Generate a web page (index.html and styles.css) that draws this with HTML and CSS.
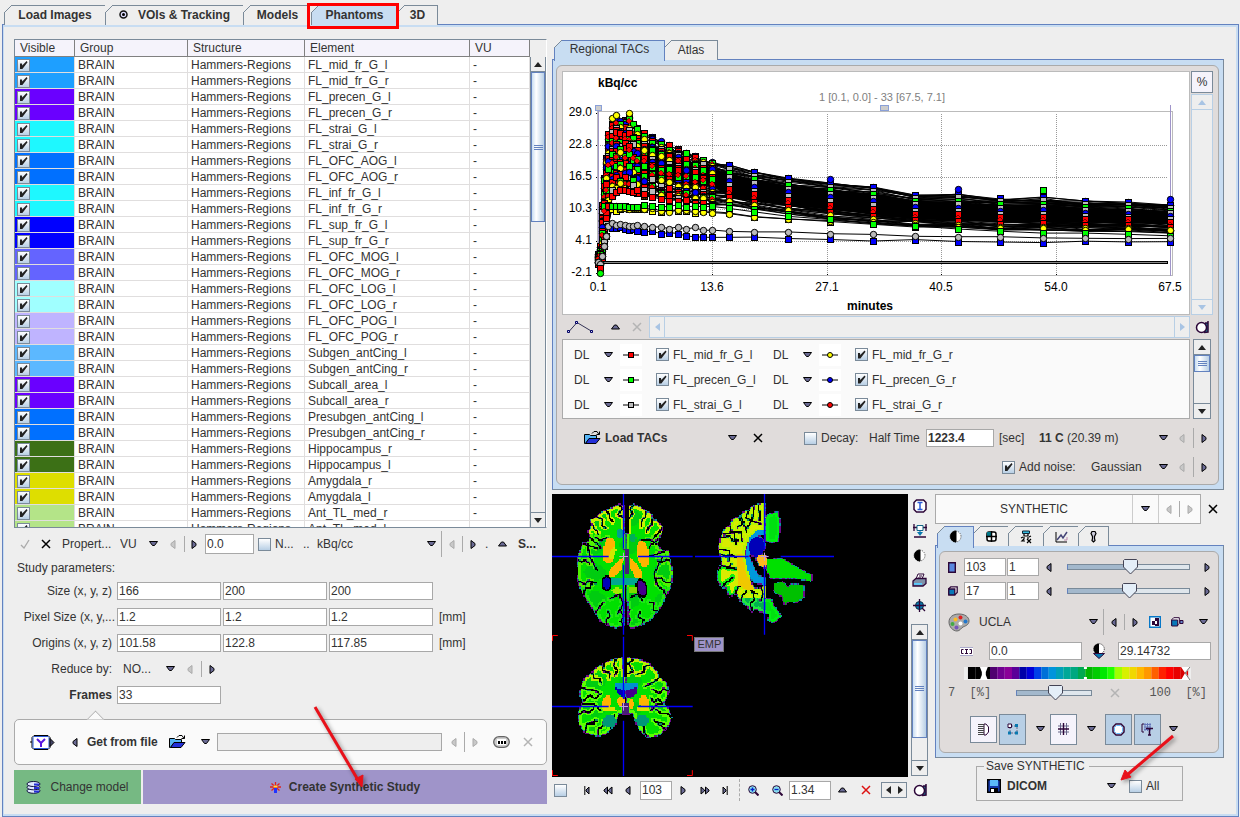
FILE: index.html
```html
<!DOCTYPE html>
<html lang="en">
<head>
<meta charset="utf-8">
<title>Phantoms</title>
<link rel="stylesheet" href="styles.css">
</head>
<body>
<svg class="sprite" aria-hidden="true">
  <symbol id="down" viewBox="0 0 9 6"><path d="M.5 .5h8l-3 4h-2z" fill="#6a6a94" stroke="#000"/></symbol>
  <symbol id="up" viewBox="0 0 9 6"><path d="M.5 5h8l-3-4h-2z" fill="#6a6a94" stroke="#000"/></symbol>
  <symbol id="left" viewBox="0 0 6 9"><path d="M5 .5v8l-4-3v-2z" fill="#6a6a94" stroke="#000"/></symbol>
  <symbol id="right" viewBox="0 0 6 9"><path d="M1 .5v8l4-3v-2z" fill="#6a6a94" stroke="#000"/></symbol>
  <symbol id="left-off" viewBox="0 0 6 9"><path d="M5 .5v8l-4-3v-2z" fill="#c8c8c8" stroke="#aaa"/></symbol>
  <symbol id="right-off" viewBox="0 0 6 9"><path d="M1 .5v8l4-3v-2z" fill="#c8c8c8" stroke="#aaa"/></symbol>
  <symbol id="cross" viewBox="0 0 10 10"><path d="M1 1l8 8M9 1L1 9" fill="none" stroke="currentColor" stroke-width="1.5"/></symbol>
  <symbol id="tick" viewBox="0 0 10 10"><path d="M1 6l3 3 5-8" fill="none" stroke="#aaa" stroke-width="1.3"/></symbol>
  <symbol id="folder" viewBox="0 0 17 14"><path d="M.5 3.5h5l1 1h6v3h-7l-4 5h-1z" fill="#55b4f4" stroke="#000"/><path d="M5 7.500h11l-4 5H1.500z" fill="#2430d8" stroke="#000"/><path d="M8 2.500l2-2h3l2 3M15.500 .5v3h-3" fill="none" stroke="#000"/></symbol>
  <symbol id="lens" viewBox="0 0 15 15"><path d="M8 3h5v9H8z" fill="#187a94"/><circle cx="6.500" cy="7.500" r="5" fill="#fff" stroke="#2c0638" stroke-width="1.500"/><path d="M13 1v11l-4 .500M10 3h3" fill="none" stroke="#2c0638" stroke-width="1.500"/></symbol>
  <symbol id="contrast" viewBox="0 0 13 13"><circle cx="6.500" cy="6.500" r="5.500" fill="#fff" stroke="#555" stroke-dasharray="1 1"/><path d="M7 1a5.500 5.500 0 0 0 0 11z" fill="#000" stroke="#000"/></symbol>
</svg>

<nav class="tabs main-tabs">
  <button class="tab w101">Load Images</button>
  <button class="tab w138"><svg width="9" height="9" viewBox="0 0 9 9"><circle cx="4.500" cy="4.500" r="3.500" fill="#ddf" stroke="#111" stroke-width="1.500"/><circle cx="4.500" cy="4.500" r="1.500"/></svg>VOIs &amp; Tracking</button>
  <button class="tab w68">Models</button>
  <button class="tab w86 on marked">Phantoms</button>
  <button class="tab w40">3D</button>
</nav>

<main class="frame">
<section class="left">
  <div class="table-box">
    <table>
      <colgroup><col class="c60"><col class="c113"><col class="c117"><col class="c165"><col class="c60"></colgroup>
      <thead><tr><th>Visible</th><th>Group</th><th>Structure</th><th>Element</th><th>VU</th></tr></thead>
      <tbody id="rows"></tbody>
    </table>
    <div class="vscroll table-scroll"><button aria-label="Scroll up"><i class="au"></i></button><div class="thumb"></div><span class="room"></span><button aria-label="Scroll down"><i class="ad"></i></button></div>
  </div>

  <div class="bar props">
    <svg width="10" height="10"><use href="#tick"/></svg>
    <button aria-label="Remove"><svg width="10" height="10"><use href="#cross"/></svg></button>
    <span>Propert...</span>
    <select aria-label="Property"><option>VU</option></select>
    <svg width="9" height="6"><use href="#down"/></svg>
    <svg width="6" height="9"><use href="#left-off"/></svg><i class="sep"></i>
    <button aria-label="Next"><svg width="6" height="9"><use href="#right"/></svg></button>
    <input type="text" value="0.0" aria-label="Value">
    <input type="checkbox" id="nn"><label for="nn">N...</label><span>..</span>
    <select aria-label="Unit"><option>kBq/cc</option></select>
    <svg width="9" height="6"><use href="#down"/></svg><i class="sep tall"></i>
    <svg width="6" height="9"><use href="#left-off"/></svg><i class="sep"></i>
    <button aria-label="Next unit"><svg width="6" height="9"><use href="#right"/></svg></button><span>.</span>
    <button aria-label="More"><svg width="9" height="6"><use href="#up"/></svg></button><b>S...</b>
  </div>

  <p class="caption">Study parameters:</p>
  <div class="params">
    <label for="sx">Size (x, y, z)</label><input type="text" id="sx" value="166"><input type="text" value="200" aria-label="Size y"><input type="text" value="200" aria-label="Size z"><span></span>
    <label for="px">Pixel Size (x, y,...</label><input type="text" id="px" value="1.2"><input type="text" value="1.2" aria-label="Pixel y"><input type="text" value="1.2" aria-label="Pixel z"><span>[mm]</span>
    <label for="ox">Origins (x, y, z)</label><input type="text" id="ox" value="101.58"><input type="text" value="122.8" aria-label="Origin y"><input type="text" value="117.85" aria-label="Origin z"><span>[mm]</span>
    <label for="red">Reduce by:</label>
    <div class="bar reduce"><select id="red"><option>NO...</option></select><svg width="9" height="6"><use href="#down"/></svg><svg width="6" height="9"><use href="#left-off"/></svg><i class="sep"></i><button aria-label="Next"><svg width="6" height="9"><use href="#right"/></svg></button></div>
    <label for="fr" class="strong">Frames</label><input type="text" id="fr" value="33">
  </div>

  <div class="bubble bar">
    <svg width="25" height="17" viewBox="0 0 25 17"><path d="M4 1.500h14l2 2v10l-2 2H4l-2-2v-10z" fill="#fff" stroke="#000"/><path d="M4 2.500h14l1 1v10l-1 1H4l-1-1v-10z" fill="none" stroke="#2a5ad8"/><path d="M7 5l4 4v4M15 5l-4 4" fill="none" stroke="#5a18e0" stroke-width="2"/><path d="M0 8h2M20 4.500l4 4-4 4z" stroke="#000" fill="#446"/></svg>
    <button aria-label="Previous"><svg width="6" height="9"><use href="#left"/></svg></button>
    <b>Get from file</b>
    <button aria-label="Open"><svg width="17" height="14"><use href="#folder"/></svg></button>
    <button aria-label="Choose"><svg width="9" height="6"><use href="#down"/></svg></button>
    <input type="text" class="gray" aria-label="File">
    <svg class="gap" width="6" height="9"><use href="#left-off"/></svg><i class="sep"></i><svg width="6" height="9"><use href="#right-off"/></svg>
    <svg width="17" height="12" viewBox="0 0 17 12"><rect x=".7" y=".7" width="15.600" height="10.600" rx="5.300" fill="#ccc" stroke="#666" stroke-width="1.300"/><rect x="4" y="3" width="9" height="6" fill="#fff"/><path d="M5 5h2v3H5zM8 5h2v3H8zM11 5h2v3h-2z"/></svg>
    <svg class="off" width="10" height="10"><use href="#cross"/></svg>
  </div>
  <div class="actions">
    <button class="change"><svg width="15" height="13" viewBox="0 0 15 13"><g fill="#dfe8ff" stroke="#101040"><ellipse cx="7.500" cy="9.800" rx="6.500" ry="2.500"/><ellipse cx="7.500" cy="6.300" rx="6.500" ry="2.500"/><ellipse cx="7.500" cy="3" rx="6.500" ry="2.500"/></g><path d="M8 3.500h5M8 7h5M8 10.500h5" stroke="#2430d8" stroke-width="2"/></svg>Change model</button>
    <button class="create"><svg width="11" height="11" viewBox="0 0 11 11"><path d="M5.500 0v4M0 5h11M1.500 1.500l8 7M9.500 1.500l-8 7" stroke="#d22" stroke-width="1.300"/><path d="M3.500 3.500h4v2h-4z" fill="#fd4"/><path d="M4 6h3v5H4z" fill="#23f"/></svg>Create Synthetic Study</button>
  </div>
</section>

<section class="right">
  <div class="tacs">
    <nav class="tabs light"><button class="tab on w111">Regional TACs</button><button class="tab w53">Atlas</button></nav>
    <div class="blue"><div class="inner chart-panel">
      <div class="chart"><svg id="chart" viewBox="563 72 626 242" preserveAspectRatio="none" role="img" aria-label="Time activity curves"></svg></div>
      <div class="chart-side"><button class="pct">%</button><div class="vscroll pale"><button aria-label="Up"><i class="au"></i></button><span class="room"></span><button aria-label="Down"><i class="ad"></i></button></div></div>
      <div class="bar lines">
        <svg width="27" height="14" viewBox="0 0 27 14"><path d="M2 11.500l8-9 15 9" fill="none" stroke="#335"/><g fill="#dde" stroke="#006"><path d="M.5 10.500h2v2h-2zM8.500 1.500h2v2h-2zM23.500 10.500h2v2h-2z"/></g></svg>
        <button aria-label="Expand"><svg width="9" height="6"><use href="#up"/></svg></button>
        <svg class="off" width="10" height="10"><use href="#cross"/></svg>
        <div class="hscroll"><button aria-label="Left"><i class="al"></i></button><span class="room"></span><button aria-label="Right"><i class="ar"></i></button></div>
      </div>
      <button class="mid" aria-label="View"><svg width="15" height="15"><use href="#lens"/></svg></button>
      <div class="curves" id="curves"></div>
      <div class="vscroll list-scroll"><button aria-label="Up"><i class="au"></i></button><div class="thumb"></div><span class="room"></span><button aria-label="Down"><i class="ad"></i></button></div>
      <div class="bar load">
        <button class="loadbtn"><svg width="17" height="14"><use href="#folder"/></svg>Load TACs</button>
        <button aria-label="Formats"><svg width="9" height="6"><use href="#down"/></svg></button>
        <button aria-label="Clear"><svg width="10" height="10"><use href="#cross"/></svg></button>
        <input type="checkbox" id="dec"><label for="dec">Decay:</label><label for="half">Half Time</label><input type="text" id="half" value="1223.4"><span>[sec]</span><span><b>11 C</b> (20.39 m)</span>
        <button aria-label="Isotope"><svg width="9" height="6"><use href="#down"/></svg></button><svg width="6" height="9"><use href="#left-off"/></svg><i class="sep"></i><button aria-label="Next"><svg width="6" height="9"><use href="#right"/></svg></button>
      </div>
      <div class="bar noise">
        <input type="checkbox" id="noise" checked><label for="noise">Add noise:</label><select aria-label="Noise"><option>Gaussian</option></select>
        <svg width="9" height="6"><use href="#down"/></svg><svg width="6" height="9"><use href="#left-off"/></svg><i class="sep"></i><button aria-label="Next"><svg width="6" height="9"><use href="#right"/></svg></button>
      </div>
    </div></div>
  </div>

  <div class="lower">
    <div class="viewer-side">
      <div class="viewer"><svg id="brain" viewBox="6 12 1068 849" role="img" aria-label="Brain slices"></svg><span class="emp">EMP</span></div>
      <div class="strip">
        <svg width="14" height="14" viewBox="0 0 14 14"><path d="M3.500 1h7L13 3.500v7L10.500 13h-7L1 10.500v-7z" fill="#fff" stroke="#2c0638" stroke-width="1.500"/><path d="M4.500 3.500h5M4.500 10.500h5M7 3v8" stroke="#2a5ad8" stroke-width="1.500"/></svg>
        <svg width="14" height="14" viewBox="0 0 14 14"><path d="M1 0v7M0 3.500h14M13 0v7M1 13h12" stroke="#2c0638" stroke-width="1.300"/><path d="M4 1.500h6v5H4z" fill="#fff" stroke="#168"/><path d="M7 6v3" stroke="#06a"/><path d="M4 8h6l-3 4z" fill="#0878b0"/></svg>
        <svg width="13" height="13"><use href="#contrast"/></svg>
        <svg width="15" height="15" viewBox="0 0 15 15"><path d="M4 6l2-5h6l-2 5z" fill="#fff" stroke="#2c0638"/><path d="M7 3h3M6 5h3" stroke="#2c0638"/><path d="M1 8l3-2.500h10v5L11 13H1z" fill="#8090a8" stroke="#2c0638" stroke-width="1.300"/><path d="M2 10h8v1.800H2z" fill="#5cf"/></svg>
        <svg width="14" height="14" viewBox="0 0 14 14"><circle cx="6.500" cy="6.500" r="4" fill="#0878b0" stroke="#134"/><path d="M0 6.500h13M6.500 0v13M9 9l3 3" stroke="#2c0638" stroke-width="1.300"/></svg>
        <div class="vscroll slice-scroll"><button aria-label="Up"><i class="au"></i></button><div class="thumb"></div><span class="room"></span><button aria-label="Down"><i class="ad"></i></button></div>
      </div>
      <div class="bar navrow">
        <input type="checkbox" aria-label="Sync">
        <button aria-label="First"><svg width="6" height="9" viewBox="0 0 6 9"><path d="M.8 0v9M5 1v7L2 5V4z" fill="#6a6a94" stroke="#000"/></svg></button>
        <button aria-label="Back"><svg width="10" height="9" viewBox="0 0 10 9"><path d="M4.500 1v7L1 5V4zM9 1v7L5.500 5V4z" fill="#6a6a94" stroke="#000"/></svg></button>
        <button aria-label="Previous"><svg width="6" height="9"><use href="#left"/></svg></button>
        <input type="text" value="103" aria-label="Slice">
        <button aria-label="Next"><svg width="6" height="9"><use href="#right"/></svg></button>
        <button aria-label="Forward"><svg width="10" height="9" viewBox="0 0 10 9"><path d="M1 1v7l3.500-3V4zM5.500 1v7L9 5V4z" fill="#6a6a94" stroke="#000"/></svg></button>
        <button aria-label="Last"><svg width="6" height="9" viewBox="0 0 6 9"><path d="M5.200 0v9M1 1v7l3-3V4z" fill="#6a6a94" stroke="#000"/></svg></button>
        <i class="sep dash"></i>
        <button aria-label="Zoom in"><svg width="11" height="11" viewBox="0 0 11 11"><circle cx="4.500" cy="4.500" r="3.800" fill="#8de" stroke="#2c0638"/><path d="M7 7l3.500 3.500" stroke="#2c0638" stroke-width="2"/><path d="M2.500 4.500h4M4.500 2.500v4" stroke="#02c" stroke-width="1.300"/></svg></button>
        <button aria-label="Zoom out"><svg width="11" height="11" viewBox="0 0 11 11"><circle cx="4.500" cy="4.500" r="3.800" fill="#8de" stroke="#2c0638"/><path d="M7 7l3.500 3.500" stroke="#2c0638" stroke-width="2"/><path d="M2.500 4.500h4" stroke="#02c" stroke-width="1.300"/></svg></button>
        <input type="text" value="1.34" aria-label="Zoom">
        <button aria-label="More"><svg width="9" height="6"><use href="#up"/></svg></button>
        <button aria-label="Delete" class="red"><svg width="10" height="10"><use href="#cross"/></svg></button>
        <span class="spin"><button aria-label="Less"><i class="al"></i></button><button aria-label="Greater"><i class="ar"></i></button></span>
        <button aria-label="View"><svg width="15" height="15"><use href="#lens"/></svg></button>
      </div>
    </div>

    <div class="controls">
      <div class="study bar">
        <div class="studybox"><select aria-label="Study"><option>SYNTHETIC</option></select><button class="cell" aria-label="Choose"><svg width="9" height="6"><use href="#down"/></svg></button><span class="pair"><svg width="6" height="9"><use href="#left-off"/></svg><i class="sep"></i><svg width="6" height="9"><use href="#right-off"/></svg></span></div>
        <button aria-label="Close"><svg width="10" height="10"><use href="#cross"/></svg></button>
      </div>
      <nav class="tabs icons">
        <button class="tab on" aria-label="Colors"><svg width="13" height="13"><use href="#contrast"/></svg></button>
        <button class="tab" aria-label="Layout"><svg width="11" height="11" viewBox="0 0 11 11"><rect x="1" y="1" width="9" height="9" rx="2" fill="#fff" stroke="#000" stroke-width="1.500"/><path d="M1 1h4v4H1z" fill="#078"/><path d="M5.500 0v11M0 5.500h11" stroke="#000" stroke-width="1.500"/></svg></button>
        <button class="tab" aria-label="Tools"><svg width="12" height="14" viewBox="0 0 12 14"><path d="M2.500 1h7v2.500h-7z" fill="#3bd" stroke="#123"/><path d="M4 4v2h4V4M3 7l-2 1M9 7l2-1M4 7v2l-2 2h3M8 7v2M7 9l4 4M11 9l-4 4" fill="none" stroke="#000" stroke-width="1.200"/></svg></button>
        <button class="tab" aria-label="Curves"><svg width="13" height="12" viewBox="0 0 13 12"><path d="M1 1v10h11" fill="none" stroke="#000"/><path d="M2 9l4-5 2 3 4-6" fill="none" stroke="#447" stroke-width="1.500"/><path d="M9 9h3V6" fill="none" stroke="#b8a"/></svg></button>
        <button class="tab" aria-label="Markers"><svg width="7" height="13" viewBox="0 0 7 13"><path d="M2 1.500h3l1 2-1.500 3v2l.5 2-1.500 1.500L2 10.500l.5-2v-2L1 3.500z" fill="#ccd" stroke="#000" stroke-width="1.200"/></svg></button>
      </nav>
      <div class="blue"><div class="inner tool-panel">
        <div class="bar sl"><svg width="8" height="11" viewBox="0 0 8 11"><path d="M.7 .7h6.600v9.600H.7z" fill="#5a88e0" stroke="#2c0638" stroke-width="1.400"/></svg><input type="text" value="103" aria-label="Plane"><input type="text" value="1" aria-label="Plane step"><button aria-label="Lower"><svg width="6" height="9"><use href="#left"/></svg></button><input type="range" min="0" max="100" value="52" aria-label="Plane slider"><button aria-label="Higher"><svg width="6" height="9"><use href="#right"/></svg></button></div>
        <div class="bar sl"><svg width="10" height="10" viewBox="0 0 10 10"><path d="M.8 2.800l2-2h6.400v5.600l-2 2H.8z" fill="#fff" stroke="#2c0638" stroke-width="1.300"/><path d="M.8 3h6v6h-6z" fill="#0878b8" stroke="#2c0638" stroke-width="1.300"/></svg><input type="text" value="17" aria-label="Time"><input type="text" value="1" aria-label="Time step"><button aria-label="Lower"><svg width="6" height="9"><use href="#left"/></svg></button><input type="range" min="0" max="100" value="51" aria-label="Time slider"><button aria-label="Higher"><svg width="6" height="9"><use href="#right"/></svg></button></div>
        <div class="bar palette"><svg width="22" height="19" viewBox="0 0 22 19"><path d="M11 1c6 0 10 3 10 7s-4 5-6 6-3 4-6 4c-4 0-8-4-8-9s4-8 10-8z" fill="#aaa" stroke="#666"/><circle cx="12.500" cy="4.500" r="2" fill="#d22"/><circle cx="7.500" cy="6.500" r="2" fill="#fb2"/><circle cx="4.500" cy="11" r="2" fill="#4a4"/><circle cx="17.500" cy="8.500" r="2" fill="#27c"/><circle cx="8.500" cy="14.500" r="2" fill="#75b"/><circle cx="12.500" cy="10.500" r="2" fill="#fff"/></svg>
          <select aria-label="Color table"><option>UCLA</option></select><svg width="9" height="6"><use href="#down"/></svg><i class="sep tall"></i><button aria-label="Previous"><svg width="6" height="9"><use href="#left"/></svg></button><i class="sep"></i><button aria-label="Next"><svg width="6" height="9"><use href="#right"/></svg></button>
          <svg width="12" height="12" viewBox="0 0 12 12"><path d="M.7 .7h10.600v10.600H.7z" fill="#fff" stroke="#0878c8" stroke-width="1.400"/><path d="M6 2h4v8H6zM3 5h3v4H3z" fill="#2c0638"/><path d="M6 5h2v3H6z" fill="#fff"/></svg>
          <svg width="13" height="10" viewBox="0 0 13 10"><path d="M.7 2.700l2-2h5.600v5.600l-2 2H.7z" fill="#fff" stroke="#2c0638"/><path d="M.7 3h6v6h-6z" fill="#0878b8" stroke="#2c0638"/><path d="M9 3.500h3v3H9z" fill="#68c" stroke="#2c0638"/></svg>
          <button aria-label="More"><svg width="9" height="6"><use href="#down"/></svg></button></div>
        <div class="bar range"><svg width="13" height="9" viewBox="0 0 13 9"><path d="M0 0h13v9H0z" fill="#fff"/><path d="M0 .5h13M0 8.500h13" stroke="#aac"/><path d="M3.500 2.500h-2v4h2M9.500 2.500h2v4h-2M5 2.500h3M5 6.500h3M6.500 2v5" fill="none" stroke="#2c0638"/></svg><input type="text" value="0.0" aria-label="Minimum"><svg width="14" height="16" viewBox="0 0 14 16"><circle cx="7" cy="6" r="5.300" fill="#fff" stroke="#333" stroke-dasharray="1 1"/><path d="M7 .5a5.500 5.500 0 0 0 0 11z"/><path d="M1.500 10.500h11L7 15.500z" fill="#0878b0" stroke="#2c0638"/></svg><input type="text" value="29.14732" aria-label="Maximum"></div>
        <div class="ramp"><svg viewBox="0 0 229 13" preserveAspectRatio="none" id="ramp"></svg></div>
        <div class="bar pctrow"><span class="mono">7&nbsp; [%]</span><input type="range" min="0" max="100" value="52" aria-label="Threshold"><svg class="off" width="10" height="10"><use href="#cross"/></svg><span class="mono">100&nbsp; [%]</span></div>
        <div class="bar toggles">
          <button class="sq short" aria-label="Mask"><svg width="11" height="13" viewBox="0 0 11 13"><path d="M6 1h2l2.500 3v5L8 12H6z" fill="#fff" stroke="#2c0638"/><path d="M1 1v11M3 1v11M5 1v11" stroke="#444" stroke-dasharray="1 1" stroke-width="2"/></svg></button>
          <button class="sq down" aria-label="Link"><svg width="12" height="13" viewBox="0 0 12 13"><path d="M4 3h5M3 4v6M4 10h5M10 4v6" stroke="#668" stroke-dasharray="2 1"/><path d="M1 1h3.500v3.500H1z" fill="#fff" stroke="#2c0638"/><path d="M8 1h3v3H8zM1 8.500h3v3H1zM8 8.500h3v3H8z" fill="#0878b0"/></svg></button>
          <button aria-label="More"><svg width="9" height="6"><use href="#down"/></svg></button>
          <button class="sq" aria-label="Grid"><svg width="11" height="12" viewBox="0 0 11 12"><path d="M2.500 0v12M8.500 0v12M0 3h11M0 9h11" stroke="#668"/><path d="M5.500 0v12M0 6h11" stroke="#2c0638" stroke-width="1.400"/></svg></button>
          <button aria-label="More"><svg width="9" height="6"><use href="#down"/></svg></button>
          <button class="sq down" aria-label="Contour"><svg width="13" height="13" viewBox="0 0 13 13"><path d="M4 1h5l3 3v5l-3 3H4L1 9V4z" fill="#fff" stroke="#2c0638" stroke-width="1.500"/><path d="M4.500 2.500h4l2 2v4l-2 2h-4l-2-2v-4z" fill="none" stroke="#6bf"/></svg></button>
          <button class="sq down" aria-label="Labels"><svg width="13" height="13" viewBox="0 0 13 13"><path d="M3 1H1v8h2" fill="none" stroke="#2c0638"/><path d="M3 1.500h7M3 4h7M3 6.500h7M4 0v8M6.500 0v8M9 0v8" stroke="#67b"/><path d="M5 5.500h7M8.500 5v7M7 12h3" stroke="#2c0638" stroke-width="1.500"/></svg></button>
          <button aria-label="More"><svg width="9" height="6"><use href="#down"/></svg></button>
        </div>
      </div></div>
      <fieldset class="save"><legend>Save SYNTHETIC</legend>
        <div class="bar saverow"><button class="loadbtn"><svg width="14" height="14" viewBox="0 0 14 14"><path d="M.7 .7h12.600v12.600H.7z" fill="#1438a8" stroke="#000" stroke-width="1.400"/><path d="M3 1h8v6H3z" fill="#5ab8f8"/><path d="M3 9h8v4H3z" fill="#000"/><path d="M4 10h3v3H4z" fill="#fff"/></svg>DICOM</button><button aria-label="Format"><svg width="9" height="6"><use href="#down"/></svg></button><input type="checkbox" id="all"><label for="all">All</label></div>
      </fieldset>
    </div>
  </div>
</section>
</main>

<svg class="arrows" width="1240" height="817" viewBox="0 0 1240 817" aria-hidden="true">
  <g class="arrow"><path d="M315 707l43 73" stroke-width="3"/><path d="M362 787l-7-8 8-4z"/></g>
  <g class="arrow"><path d="M1173 736l-46 39" stroke-width="3"/><path d="M1121 780l4-10 6 7z"/></g>
</svg>
<script src="app.js"></script>
</body>
</html>
```

FILE: styles.css
```css
* { box-sizing: border-box; }
body { margin: 0; padding: 5px 1px 0 2px; min-height: 100vh; display: flex; flex-direction: column; background: #eee; color: #333; font: 12px/16px "Liberation Sans", Arial, sans-serif; }
button, input, select { font: inherit; color: inherit; margin: 0; padding: 0; border: 0; background: none; border-radius: 0; }
button { display: inline-flex; align-items: center; justify-content: center; white-space: nowrap; }
svg { display: block; flex: none; color: #000; }
p { margin: 0; }
label, span, b { white-space: nowrap; }
select { appearance: none; min-width: 0; }
.sprite { position: absolute; width: 0; height: 0; }
svg.off { color: #b4b4b4; }
.red svg { color: #d11; }

input[type="text"] { width: 100%; min-width: 0; height: 18px; border: 1px solid #a8a8a8; background: #fff; padding: 0 1px; }
input[type="text"].gray { background: #eee; }
input[type="checkbox"] { appearance: none; width: 13px; height: 13px; border: 1px solid #7a8a99; background: linear-gradient(#fff, #b8cfe5); display: block; flex: none; position: relative; }
input[type="checkbox"]:checked::before { content: ""; position: absolute; inset: 1px; background: #222; clip-path: polygon(11% 33%, 33% 33%, 36% 56%, 84% 5%, 95% 20%, 38% 95%, 11% 95%); }
input[type="range"] { appearance: none; width: 100%; min-width: 0; height: 16px; }
input[type="range"]::-webkit-slider-runnable-track { height: 6px; border: 1px solid #7a8a99; border-left-color: #6382bf; background: linear-gradient(90deg, #a3b8cc 52%, #dfe6ec 52%); }
input[type="range"]::-webkit-slider-thumb { appearance: none; width: 15px; height: 16px; margin-top: -6px; background: url("data:image/svg+xml,%3Csvg xmlns='http://www.w3.org/2000/svg' width='15' height='16'%3E%3Cpath d='M.5 1.500l1-1h12l1 1V8l-7 7-7-7z' fill='%23e4eef8' stroke='%23445'/%3E%3C/svg%3E"); }

.bar { display: grid; align-items: center; }
.sep { width: 1px; height: 16px; background: #aaa; }
.sep.tall { height: 26px; }
.sep.dash { height: 22px; background: none; border-left: 1px dashed #aaa; }

.tabs { display: flex; padding-left: 2px; height: 19px; flex: none; }
.tab { position: relative; height: 20px; padding-bottom: 2px; border: 1px solid #7a8a99; border-left-width: 0; border-bottom-width: 0; background: #eee; font-weight: bold; gap: 10px; z-index: 0; }
.tab:first-child { border-left-width: 1px; }
.tab::before { content: ""; position: absolute; left: -1px; top: -1px; width: 8px; height: 8px; background: linear-gradient(135deg, #eee 44%, #7a8a99 44% 56%, transparent 56%); }
.tab.on { background: #c8ddf2; border-color: #6382bf; z-index: 2; height: 22px; padding-bottom: 4px; }
.light .tab { font-weight: normal; }
.light .tab.on { height: 21px; }
.marked::after { content: ""; position: absolute; inset: -3px -2px -2px -5px; border: 3px solid #f00; }
.w101 { width: 102px; } .w138 { width: 138px; } .w68 { width: 68px; } .w86 { width: 86px; } .w40 { width: 40px; }
.w111 { width: 111px; } .w53 { width: 53px; }

.frame { flex: 1; display: grid; grid-template-columns: minmax(0, 533fr) minmax(0, 672fr); gap: 5px; border: 1px solid #6382bf; box-shadow: inset 1px 2px #c8ddf2, inset -2px -2px #c8ddf2; padding: 14px 14px 10px 11px; }

.left { display: flex; flex-direction: column; }
.table-box { display: flex; height: calc(100vh - 328px); min-height: 200px; overflow: hidden; border: 1px solid #7a8a99; border-right-color: #fff; align-items: flex-start; }
table { flex: 1; width: 100%; table-layout: fixed; border-collapse: separate; border-spacing: 0; background: #fff; }
.c60 { width: 60px; } .c113 { width: 113px; } .c117 { width: 117px; } .c165 { width: 165px; }
th { height: 17px; line-height: 16px; padding: 0 0 0 5px; text-align: left; font-weight: normal; background: #f5f3fb; border: solid #808080; border-width: 0 1px 1px 0; }
td { height: 16px; line-height: 14px; padding: 1px 0 0 3px; border: solid #e0dede; border-width: 0 1px 1px 0; white-space: nowrap; overflow: hidden; }
td input[type="checkbox"] { margin-left: -1px; }

.vscroll { display: flex; flex-direction: column; width: 17px; border: 1px solid #7a8a99; background: #eee; }
.vscroll button { height: 15px; flex: none; border-bottom: 1px solid #7a8a99; }
.vscroll button:last-child { border-bottom: 0; border-top: 1px solid #7a8a99; }
.room { flex: 1; }
.thumb { border: 1px solid #6382bf; background: linear-gradient(#6382bf, #6382bf) center / 9px 1px no-repeat, linear-gradient(#6382bf, #6382bf) center calc(50% - 2px) / 9px 1px no-repeat, linear-gradient(#6382bf, #6382bf) center calc(50% + 2px) / 9px 1px no-repeat, linear-gradient(90deg, #c8ddf2, #fff 35%, #b8cfe5); }
.table-scroll { height: calc(100% - 17px); margin-top: 17px; width: 17px; border-width: 0 1px; }
.table-scroll .thumb { flex: 0 0 32%; }
.au, .ad, .al, .ar { width: 0; height: 0; border: 4px solid transparent; display: block; }
.au { border-bottom: 5px solid #222; border-top: 0; } .ad { border-top: 5px solid #222; border-bottom: 0; }
.al { border-right: 5px solid #222; border-left: 0; } .ar { border-left: 5px solid #222; border-right: 0; }
.vscroll.pale, .pale button, .vscroll.pale button:last-child { border-color: #b8cfe5; }
.pale .au { border-bottom-color: #a8c4e4; } .pale .ad { border-top-color: #a8c4e4; }
.hscroll .al { border-right-color: #a8c4e4; } .hscroll .ar { border-left-color: #a8c4e4; }

.props { height: 32px; padding-left: 6px; grid-template-columns: 21px 21px 58px 29px 21px 14px 7px 14px 53px 17px 28px 14px 1fr 14px 8px 13px 8px 15px 13px 20px 29px; justify-items: start; }
.props input[type="text"] { width: 49px; height: 20px; }
.caption { padding-left: 3px; margin-bottom: 6px; }
.params { display: grid; grid-template-columns: 101px 104px 104px 104px auto; column-gap: 2px; row-gap: 8px; grid-auto-rows: 18px; align-items: center; justify-content: start; }
.params label { text-align: right; padding-right: 3px; }
.params label:nth-of-type(2) { padding-right: 0; }
.params > span { padding-left: 4px; }
.strong { font-weight: bold; grid-column: 1; }
.reduce { grid-column: 2 / -1; grid-template-columns: 43px 21px 14px 8px 10px; padding-left: 6px; justify-items: start; }
.bubble { position: relative; height: 46px; margin-top: 15px; padding: 0 13px 0 15px; border: 1px solid #aaa; border-radius: 5px; background: #fafafa; grid-template-columns: 42px 15px 82px 32px 16px 1fr 22px 8px 21px 30px 10px; justify-items: start; }
.bubble .sep { height: 20px; }
.bubble .gap { margin-left: 9px; }
.bubble::before { content: ""; position: absolute; left: 74px; top: -7px; width: 12px; height: 12px; background: #fafafa; border: solid #aaa; border-width: 1px 0 0 1px; transform: rotate(45deg); clip-path: polygon(0 0, 100% 0, 0 100%); }
.actions { display: grid; grid-template-columns: 127px 1fr; gap: 2px; margin-top: 5px; height: 34px; }
.change { background: #76b983; gap: 9px; } .create { background: #9f94c9; font-weight: bold; gap: 8px; }

.right { display: flex; flex-direction: column; gap: 4px; padding-top: 1px; min-width: 0; }
.blue { border: 1px solid #6382bf; border-right-color: #7a8a99; border-bottom-color: #7a8a99; background: #c8ddf2; padding: 5px 4px 4px 3px; }
.inner { border: 1px solid #aaa; border-radius: 6px; background: #e0dcdb; }
.chart-panel { display: grid; grid-template-columns: minmax(0, 1fr) 22px; column-gap: 1px; padding: 5px; }
.chart { border: 1px solid #bbb; background: #fff; }
.chart svg { width: 100%; height: 242px; }
.chart-side { display: flex; flex-direction: column; gap: 1px; }
.pct { height: 22px; border: 1px solid #7a8a99; background: #f5f3fb; color: #333; }
.chart-side .vscroll { width: 22px; flex: 1; }
.lines { height: 24px; padding-left: 5px; grid-template-columns: 44px 21px 17px 1fr; justify-items: start; }
.hscroll { width: 100%; height: 22px; display: flex; border: 1px solid #b8cfe5; background: #eee; }
.hscroll button { width: 15px; border-right: 1px solid #b8cfe5; } .hscroll button:last-child { border-right: 0; border-left: 1px solid #b8cfe5; }
.curves { display: grid; grid-template-columns: 199px 199px; grid-auto-rows: 25px; height: 80px; padding: 2px 0 0 11px; border: 1px solid #aaa; background: #fafafa; overflow: hidden; }
.curve { display: grid; grid-template-columns: 30px 16px 36px 17px 1fr; align-items: center; }
.curve .mark { background: #fff; }
.list-scroll { height: 80px; margin-left: 2px; width: 18px; }
.list-scroll .thumb { flex: 0 0 17px; }
.load { grid-column: 1 / -1; height: 38px; padding-left: 22px; grid-template-columns: 144px 25px 1fr 17px 48px 57px 68px 40px 125px 20px 14px 8px 12px; justify-items: start; }
.load input[type="text"] { font-weight: bold; }
.load span { padding-left: 5px; }
.loadbtn { font-weight: bold; gap: 4px; }
.noise { grid-column: 1 / -1; height: 20px; margin-bottom: 2px; grid-template-columns: 17px 72px 68px 20px 14px 8px 12px; justify-content: end; justify-items: start; }
.load .sep, .noise .sep { height: 20px; }

.lower { display: grid; grid-template-columns: minmax(0, 376fr) minmax(0, 289fr); gap: 7px; }
.viewer-side { display: grid; grid-template-columns: minmax(0, 1fr) 17px; column-gap: 3px; align-content: start; }
.viewer { position: relative; background: #000; }
.viewer svg { width: 100%; }
.emp { position: absolute; left: 40%; top: 50.500%; height: 15px; padding: 0 2px; line-height: 13px; border: 1px solid #777; background: #9f94c9; font-size: 11px; }
.strip { display: flex; flex-direction: column; align-items: center; gap: 11px; padding: 5px 0 1px; }
.slice-scroll { flex: 1; }
.slice-scroll .thumb { flex: 0 0 65%; }
.navrow { grid-column: 1 / -1; height: 26px; padding-left: 2px; justify-items: start; grid-template-columns: 30px 19px 22px 15px 40px 20px 22px 17px 9px 24px 17px 49px 23px 20px 1fr 15px; }
.navrow input[type="text"] { width: 32px; height: 19px; }
.navrow input[type="text"]:nth-of-type(3) { width: 42px; }
.spin { display: flex; height: 16px; border: 1px solid #7a8a99; }
.spin button { width: 12px; }

.studybox { display: grid; grid-template-columns: 1fr 27px 41px; height: 30px; border: 1px solid #aaa; background: #fafafa; }
.study { grid-template-columns: 1fr 23px; }
.studybox select { text-align: center; text-align-last: center; }
.cell { border: solid #ccc; border-width: 0 1px; }
.pair { display: flex; align-items: center; justify-content: center; gap: 7px; }
.icons { margin-top: 2px; height: 19px; }
.icons .tab { width: 35px; padding-bottom: 0; }
.icons .tab.on { width: 37px; padding-bottom: 2px; }
.icons .tab:last-child { width: 30px; }
.tool-panel { padding: 3px 6px 1px 8px; }
.sl { height: 24px; grid-template-columns: 16px 42px 33px 28px minmax(0, 1fr) 22px; justify-items: start; }
.sl input:nth-of-type(2) { width: 32px; margin-left: 1px; }
.sl button { margin-left: 7px; }
.sl button:last-child { margin-left: 14px; }
.palette { height: 38px; grid-template-columns: 31px 1fr 14px 8px 13px 8px 17px 22px 28px 13px; justify-items: start; }
.range { height: 20px; padding-left: 12px; grid-template-columns: 29px 1fr 36px 1fr; padding-right: 1px; }
.range svg:nth-of-type(2) { margin-left: 10px; }
.ramp { margin: 6px 21px 0 16px; height: 13px; }
.ramp svg { width: 100%; height: 13px; }
.pctrow { height: 25px; padding-right: 5px; grid-template-columns: 68px 76px 1fr auto; }
.pctrow .off { margin-left: 18px; }
.mono { font: 12px/16px "Liberation Mono", monospace; color: #555; }
.toggles { height: 44px; margin-top: 2px; padding-left: 22px; grid-template-columns: 29px 37px 14px 37px 18px 29px 35px 12px; justify-items: start; }
.sq { width: 27px; height: 31px; border: 1px solid #7a8a99; background: #f5f3fb; }
.sq.short { height: 27px; } .sq.down { background: #b8cfe5; }
.save { margin: 0 41px; padding: 0 8px 0 10px; border: 1px solid #aaa; height: 43px; }
.save legend { padding: 0 4px 0 2px; margin-left: -3px; }
.saverow { height: 24px; grid-template-columns: 1fr 22px 17px 28px; justify-items: start; }
.save .loadbtn { gap: 6px; }

.arrows { position: absolute; left: 0; top: 0; width: 1240px; height: 817px; pointer-events: none; z-index: 5; }
.arrow { fill: #e8111a; stroke: #e8111a; filter: drop-shadow(2px 2px 2px #0006); }
```

FILE: app.js
```js
const byId = id => document.getElementById(id);
let seed = 7;
const rnd = () => (seed = (seed * 16807) % 2147483647) / 2147483647;

/* Region table */
const regions = [
  ['#1e9fff', 'FL_mid_fr_G'], ['#6a00ff', 'FL_precen_G'], ['#1ef8ff', 'FL_strai_G'], ['#0070ff', 'FL_OFC_AOG'],
  ['#1ef8ff', 'FL_inf_fr_G'], ['#0000ff', 'FL_sup_fr_G'], ['#6464ff', 'FL_OFC_MOG'], ['#a0ffff', 'FL_OFC_LOG'],
  ['#bfb4ff', 'FL_OFC_POG'], ['#5cb8ff', 'Subgen_antCing'], ['#6a00ff', 'Subcall_area'], ['#0070ff', 'Presubgen_antCing'],
  ['#3c7016', 'Hippocampus', 'rl'], ['#dede00', 'Amygdala', 'rl'], ['#b4e488', 'Ant_TL_med', 'rl']
];
byId('rows').innerHTML = regions.flatMap(([color, name, order]) => [...(order || 'lr')].map(side =>
  `<tr><td style="background:${color}"><input type="checkbox" checked aria-label="${name}_${side}"></td><td>BRAIN</td><td>Hammers-Regions</td><td>${name}_${side}</td><td>-</td></tr>`)).join('');

/* Curve list */
const shapes = {
  s: c => `<rect x="8.500" y="8.500" width="5" height="5" fill="${c}" stroke="#000"/>`,
  c: c => `<circle cx="11" cy="11" r="2.500" fill="${c}" stroke="#000"/>`
};
const curves = [['FL_mid_fr_G_l', 's', 'red'], ['FL_mid_fr_G_r', 'c', '#ff0'], ['FL_precen_G_l', 's', '#0f0'],
  ['FL_precen_G_r', 'c', '#00f'], ['FL_strai_G_l', 's', '#bbb'], ['FL_strai_G_r', 'c', 'red']];
byId('curves').innerHTML = curves.map(([name, shape, color], i) =>
  `<div class="curve"><span>DL</span><svg width="9" height="6"><use href="#down"/></svg><svg class="mark" width="22" height="22"><path d="M3 11h16" stroke="#000"/>${shapes[shape](color)}</svg><input type="checkbox" id="cv${i}" checked><label for="cv${i}">${name}</label></div>`).join('');

/* Time activity chart */
const xs = [598, 600, 602, 604, 606, 608, 612, 616, 620, 625, 629, 633, 637, 644, 652, 661, 669, 678, 686, 695, 703, 712, 729, 754, 788, 830, 873, 915, 958, 1000, 1043, 1085, 1128, 1170];
const top_ = [254, 246, 205, 178, 158, 134, 124, 118, 121, 120, 117, 124, 128, 133, 137, 141, 145, 149, 153, 156, 159, 162, 165, 172, 178, 183, 187, 195, 194, 198, 197, 201, 202, 205];
const low = [264, 266, 258, 240, 222, 206, 196, 192, 190, 190, 191, 192, 193, 196, 197, 199, 200, 201, 202, 203, 204, 205, 205, 209, 214, 219, 223, 226, 228, 230, 230, 231, 231, 233];
const kinds = [['s', 'red'], ['c', '#ff0'], ['s', '#0f0'], ['c', '#00f'], ['s', '#bbb'], ['d', 'red']];
const marker = (k, color, x, y) => k === 's' ? `<rect x="${x - 2.5}" y="${y - 2.5}" width="6" height="6" fill="${color}"/>`
  : k === 'c' ? `<circle cx="${x + .5}" cy="${y + .5}" r="3.200" fill="${color}"/>`
  : `<path d="M${x - 3} ${y}l3-3 3 3-3 3z" fill="${color}" stroke-width=".5"/>`;
let lines = '', marks = '';
const series = (ys, k, color, skipMarks) => {
  lines += `<path d="M${xs.map((x, i) => x + ' ' + ys[i].toFixed(1)).join('L')}"/>`;
  xs.forEach((x, i) => { if (!skipMarks || i < 22) marks += marker(k, color, x, Math.round(ys[i])); });
};
for (let n = 0; n < 72; n++) {
  const f = (n * 37 % 72) / 71;
  series(xs.map((x, i) => top_[i] + (low[i] - top_[i]) * Math.min(1, Math.max(0, f + (rnd() - .5) * .14))), ...kinds[n * 5 % 7 % 6], f > .1 && f < .9);
}
/* Dense core of the bundle */
const core = xs.map((x, i) => [x, top_[i] + 6 + rnd() * 3]).concat(xs.map((x, i) => [x, low[i] - (i < 22 ? 16 : 7) - rnd() * 3]).reverse());
const column = ['s#00f', 's#bbb', 's#0f0', 's#bbb', 'c#00f', 's#bbb', 's#f00', 'd#f00', 's#f00', 'c#ff0', 's#0f0'];
xs.forEach((x, i) => {
  if (i < 22) return;
  const span = low[i] - top_[i];
  marks += `<path d="M${x + .5} ${top_[i]}V${low[i]}" stroke-width="7"/>`;
  column.forEach((c, n) => { marks += marker(c[0], c.slice(1), x, Math.round(top_[i] + span * n / 10)); });
});
const early = [262, 264, 256, 246, 236, 226];
const tail = (a, b) => xs.map((x, i) => i < 6 ? early[i] : x < 712 ? a[0] + (a[1] - a[0]) * (x - 612) / 100 + (rnd() - .5) * 3 : b[0] + (b[1] - b[0]) * (1 - Math.exp(-(x - 712) / 220)) + (rnd() - .5) * 2);
series(tail([209, 212], [212, 236]), 's', '#ff0');
series(tail([207, 213], [213, 233]), 'c', '#ff0');
series(tail([206, 206], [206, 240]), 's', '#0f0');
series(tail([228, 237], [237, 243]), 's', '#00f');
series(tail([224, 230], [230, 239]), 'c', '#bbb');
[[612, 118], [616, 115], [629, 113], [620, 152]].forEach(p => { marks += marker('c', '#ff0', ...p); });
marks += marker('s', 'red', 600, 268) + marker('c', '#0f0', 600, 273) + marker('c', '#00f', 830, 179) + marker('c', '#00f', 958, 189) + marker('s', '#0f0', 1043, 190) + marker('c', '#00f', 1170, 199);
const yl = [['29.0', 112], ['22.8', 144], ['16.5', 176], ['10.3', 208], ['4.1', 240], ['-2.1', 272]];
const xl = [['0.1', 598], ['13.6', 712], ['27.1', 827], ['40.5', 941], ['54.0', 1056], ['67.5', 1170]];
byId('chart').innerHTML = `<g font-family="Liberation Sans" font-size="12" fill="#000">
<text x="598" y="87" font-weight="bold">kBq/cc</text><text x="847" y="310" font-weight="bold">minutes</text>
<text x="882" y="101" font-size="11" fill="#808080" text-anchor="middle">1 [0.1, 0.0] - 33 [67.5, 7.1]</text>
${yl.map(([t, y]) => `<text x="592" y="${y + 4}" text-anchor="end">${t}</text><path d="M596 ${y + 1.5}h3" stroke="#000"/>`).join('')}
${xl.map(([t, x]) => `<text x="${x}" y="291" text-anchor="middle">${t}</text><path d="M${x + .5} 274v2" stroke="#000"/>`).join('')}</g>
<rect x="597.500" y="111.500" width="575" height="164" fill="none" stroke="#bbb"/>
<g stroke="#999" stroke-dasharray="1 1">${yl.slice(1, 5).map(([, y]) => `<path d="M598 ${y + 1.5}h570"/>`).join('')}${xl.slice(1, 5).map(([, x]) => `<path d="M${x + .5} 114v160"/>`).join('')}</g>
<path d="M598.500 108v168M1170.500 105v171" stroke="#9f94c9"/><g fill="#ccc" stroke="#8aa0d8"><rect x="595.500" y="105.500" width="6" height="5"/><rect x="880.500" y="105.500" width="8" height="5"/></g>
<path d="M600 262.500h568" stroke="#000" stroke-width="3"/><path d="M601 262.500h566" stroke="#888"/>
<path d="M${core.map(p => p.join(' ')).join('L')}z"/><g fill="none" stroke="#000">${lines}</g><g stroke="#000">${marks}</g>`;

/* Brain slices on a voxel grid, 4 view units per voxel */
const inside = (p, x, y) => {
  let r = false;
  for (let i = 0, j = p.length - 1; i < p.length; j = i++) {
    const [a, b] = p[i], [c, d] = p[j];
    if ((b > y) !== (d > y) && x < (c - a) * (y - b) / (d - b) + a) r = !r;
  }
  return r;
};
const pts = s => s.split(' ').map(q => q.split(',').map(Number));
const segDist = (x, y, [a, b], [c, d]) => {
  const t = Math.max(0, Math.min(1, ((x - a) * (c - a) + (y - b) * (d - b)) / ((c - a) ** 2 + (d - b) ** 2 || 1)));
  return Math.hypot(x - a - t * (c - a), y - b - t * (d - b));
};
const edgeDist = (p, x, y) => Math.min(...p.map((q, i) => segDist(x, y, q, p[(i + 1) % p.length])));
const ellipse = (cx, cy, rx, ry, tilt = 0) => {
  const o = [];
  for (let k = 0; k < 24; k++) {
    const a = k * Math.PI / 12, u = rx * Math.cos(a), v = ry * Math.sin(a);
    o.push([cx + u * Math.cos(tilt) - v * Math.sin(tilt), cy + u * Math.sin(tilt) + v * Math.cos(tilt)]);
  }
  return o;
};
function slice({ outlines, centre, blobs, depth, step, rim, core, folds = 2, cuts: extra = [] }) {
  const cuts = extra.map(pts);
  outlines.slice(0, folds).forEach(o => {
    for (let i = 1; i < o.length; i += step) {
      const [x, y] = o[i], dx = centre[0] - x, dy = centre[1] - y, l = Math.hypot(dx, dy);
      if (l < 90) continue;
      const ux = dx / l, uy = dy / l, line = [[x, y]];
      let px = x, py = y, side = (rnd() - .5) * 2;
      for (let s = 0; s < 3; s++) {
        px += (ux - uy * side) * depth * (.2 + rnd() * .2); py += (uy + ux * side) * depth * (.2 + rnd() * .2);
        line.push([px, py]); side = -side;
      }
      cuts.push(line);
    }
  });
  const all = outlines.concat(blobs.map(b => b[0])).flat();
  const x0 = Math.floor(Math.min(...all.map(p => p[0])) / 4) * 4 - 8, x1 = Math.max(...all.map(p => p[0])) + 8;
  const y0 = Math.floor(Math.min(...all.map(p => p[1])) / 4) * 4 - 8, y1 = Math.max(...all.map(p => p[1])) + 8;
  const out = {};
  const dot = (x, y, c) => { (out[c] = out[c] || []).push(`M${x} ${y}h4v4h-4z`); };
  for (let y = y0; y < y1; y += 4) for (let x = x0; x < x1; x += 4) {
    const blob = blobs.filter(b => inside(b[0], x, y)).pop();
    if (blob) { if (blob[1] !== '#000') dot(x, y, blob[1]); continue; }
    const holders = outlines.filter(p => inside(p, x, y));
    if (!holders.length) {
      if (Math.min(...outlines.map(p => edgeDist(p, x, y))) < 3 || blobs.some(b => edgeDist(b[0], x, y) < 2.5)) dot(x, y, rnd() < .6 ? '#6a0a8a' : '#0a90a0');
      continue;
    }
    const edge = Math.max(...holders.map(p => edgeDist(p, x, y)));
    let d = 99;
    cuts.forEach(c => { for (let i = 1; i < c.length; i++) d = Math.min(d, segDist(x, y, c[i - 1], c[i])); });
    if (d < 2) continue;
    if (d < 3.2) { dot(x, y, rnd() < .4 ? '#600a80' : '#009060'); continue; }
    dot(x, y, Math.min(edge, d) < 8 && holders.length < 2 ? rim(x, y) : core(x, y));
  }
  return Object.entries(out).map(([c, d]) => `<path fill="${c}" d="${d.join('')}"/>`).join('');
}
const inner = (x, y) => Math.sin(x / 17) + Math.cos(y / 13) > .6 ? '#00cc10' : '#00e000';
const orange = '#ffb400', navy = '#0000b8', violet = '#44008c', sky = '#0090d0';
const axial = slice({
  outlines: [
    pts('218,46 205,42 185,52 165,60 150,68 140,80 120,90 126,104 114,122 120,140 112,156 98,158 90,180 80,205 84,240 82,270 90,292 100,312 118,340 135,365 150,390 170,402 195,410 217,404'),
    pts('236,46 250,42 275,55 285,62 300,68 306,86 320,92 335,110 332,128 322,144 320,165 340,184 352,182 358,210 365,245 362,275 355,300 345,312 335,340 320,362 300,385 275,400 245,412 232,404'),
    pts('150,150 205,130 245,130 300,150 320,220 300,310 240,330 180,325 130,280 130,200')
  ],
  centre: [225, 225], depth: 46, step: 2,
  blobs: [
    [ellipse(208, 128, 10, 15), '#00a090'], [ellipse(247, 142, 10, 14), '#00b058'],
    [ellipse(176, 180, 19, 40, .12), orange], [ellipse(277, 190, 18, 42, -.15), orange], [ellipse(186, 188, 8, 20, .4), '#d0e800'],
    [pts('217,200 215,235 190,258 172,256 178,236 200,215'), orange], [pts('236,198 238,230 255,262 276,262 272,240 250,210'), orange],
    [pts('178,264 262,262 258,280 182,282'), '#00a890'], [ellipse(168, 278, 15, 24), '#000'], [ellipse(168, 278, 11, 19), navy],
    [ellipse(273, 292, 17, 29, -.25), '#000'], [ellipse(273, 292, 12, 24, -.25), violet],
    [pts('220,176 234,176 232,250 222,250'), '#482078'], [ellipse(200, 300, 16, 9), '#a0e800'], [ellipse(246, 298, 14, 9), '#80d800']
  ],
  rim: (x, y) => y < 130 ? '#c8f000' : y > 290 ? '#20e810' : '#50f000', core: inner,
  cuts: ['226,36 226,170', '225,284 226,414', '178,325 205,310 218,340 200,370', '240,320 262,310 275,330', '110,160 118,200 140,240', '335,200 310,250 320,285', '135,140 150,150 170,140', '318,160 296,146 270,150']
});
const coronal = slice({
  outlines: [
    pts('215,502 195,505 180,510 160,520 140,532 125,545 102,565 92,590 88,615 100,630 90,650 84,672 88,702 104,725 122,730 142,735 162,730 180,715 195,690 204,668 220,666'),
    pts('232,502 250,505 275,510 298,522 318,545 325,562 345,575 354,602 345,626 335,638 350,650 362,680 354,700 345,716 320,735 290,738 270,720 255,690 248,668 230,666'),
    pts('196,560 250,560 250,600 196,600')
  ],
  centre: [222, 625], depth: 50, step: 2,
  blobs: [
    [pts('192,578 262,578 262,592 238,604 200,598'), sky], [pts('194,590 222,600 222,618 212,620 198,604'), navy], [pts('226,600 260,588 256,612 236,624 226,618'), violet],
    [ellipse(168, 635, 13, 22, .2), orange], [ellipse(210, 632, 11, 14), orange], [ellipse(280, 635, 14, 22, -.2), orange], [ellipse(241, 640, 9, 13), orange],
    [pts('154,652 192,650 200,662 160,662'), '#e0e000'], [pts('258,652 296,650 296,662 256,662'), '#e0e000'],
    [ellipse(177, 692, 20, 20), '#009878'], [ellipse(275, 690, 20, 18), '#009878'], [pts('216,640 234,640 234,672 216,672'), '#482078']
  ],
  rim: (x, y) => y < 570 ? '#b8f000' : '#5cff00', core: inner,
  cuts: ['226,496 226,574', '88,640 130,640 150,660', '352,640 320,640 300,660', '110,700 140,690', '340,700 312,690']
});
const at = s => pts(s).map(([x, y]) => [x + 420, y]);
const sagittal = slice({
  outlines: [
    at('224,40 205,40 190,46 175,58 158,66 145,80 128,86 118,105 102,116 92,140 86,165 88,190 96,212 82,240 82,268 95,290 110,292 116,318 138,308 150,330 170,345 184,362 200,350 210,330 225,322 225,284 205,296 185,290 172,240 160,190 176,140 200,122 224,118'),
    at('190,345 205,325 240,325 248,345 270,375 250,396 234,388 236,370 210,362'),
    at('224,80 238,70 262,64 268,100 262,150 245,156 226,150')
  ],
  centre: [642, 200], depth: 56, step: 2, folds: 1,
  blobs: [
    [at('224,116 200,120 176,142 164,190 170,240 190,276 224,282 224,262 204,256 188,230 176,196 188,150 206,134 224,132'), '#0098dc'],
    [ellipse(618, 168, 24, 30, .25), navy], [at('196,202 208,192 226,196 232,216 222,232 206,224'), '#ffb820'],
    [at('140,190 158,190 162,236 186,284 192,298 176,300 144,286 140,240'), '#f0c800'],
    [at('230,208 275,204 308,224 346,246 364,252 362,270 320,264 240,264 230,240'), '#00e000'],
    [at('252,280 276,274 290,290 304,280 338,284 338,320 318,336 296,332 282,342 276,318 250,302'), '#00c000']
  ],
  rim: (x, y) => x > 644 ? '#00f010' : y > 230 && x < 560 ? '#10f010' : y > 320 ? '#20e840' : '#b8f400',
  core: (x, y) => x > 644 ? '#00e010' : y > 320 ? '#00b050' : '#d8ec00',
  cuts: [[560, 60, 580, 96, 560, 110], [520, 130, 550, 124, 556, 160], [506, 175, 536, 180, 534, 210], [515, 225, 560, 236], [610, 50, 604, 90, 630, 100], [600, 300, 620, 310]].map(a => a.map((v, i) => v + (i % 2 ? '' : ',')).join(' ').replace(/, /g, ','))
});
const corner = (x, y, sx, sy) => `M${x + 16 * sx} ${y}h${-16 * sx}v${16 * sy}`;
byId('brain').innerHTML = `<g shape-rendering="crispEdges">${axial}${coronal}${sagittal}</g>
<path d="M6 199.500H176M264 199.500H428M220.500 12V176M220.500 224V434M435 199.500H596M692 199.500H852M643.500 12V176M643.500 226V434M6 649.500H176M264 649.500H428M220.500 440V626M220.500 692V858" fill="none" stroke="#00f" stroke-width="4"/>
<path d="M208 199.500h26M220.500 188v24M632 199.500h24M643.500 188v24M208 649.500h26M220.500 638v24" stroke="#c0a0e0" stroke-width="3"/>
<path d="${corner(7.5, 436.5, 1, 1)}${corner(427, 436.5, -1, 1)}${corner(7.5, 856.5, 1, -1)}${corner(427, 856.5, -1, -1)}" fill="none" stroke="red" stroke-width="3"/>`;

/* Color ramp */
const ramp = ['#000', '#000', '#000', '#500070', '#700090', '#8a0098', '#5a0098', '#0000a8', '#0000d8', '#0040e8', '#0070d8', '#0094dc', '#00a0b8', '#00a898', '#00a880', '#00a850', '#00b400', '#00cc00', '#00e800', '#20ff00', '#a0ff00', '#d8f000', '#f0d800', '#ffb800', '#ff9800', '#ff6000', '#ff2000', '#f00', '#e80000', '#d80000'];
byId('ramp').innerHTML = '<rect width="229" height="13" fill="#eee"/>' + ramp.map((c, i) => `<rect x="${4 + i * 7.4}" width="7.500" height="12" fill="${c}"/>`).join('') +
  '<path d="M16 0h8l-2 5v3l2 5h-8l2-5V5zM219 0h9l-4 6 4 7h-9l4-7z" fill="#fff"/><path d="M228 0l-5 6 5 7" fill="none" stroke="#777"/><path d="M121 0h3v2h-3zM121 10h3v2h-3z" fill="#fff"/>';
```
